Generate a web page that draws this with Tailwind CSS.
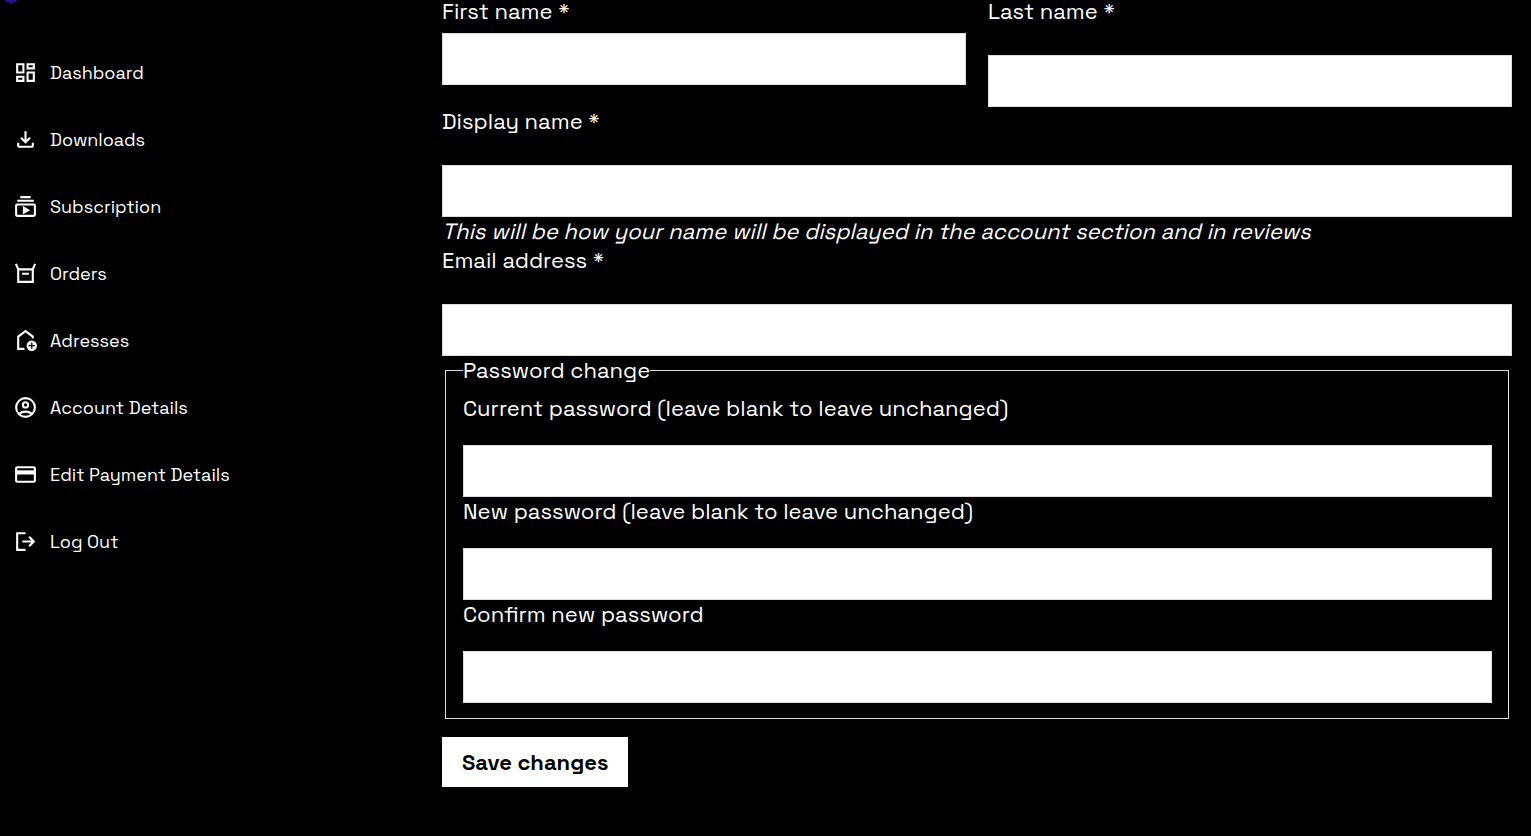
<!DOCTYPE html>
<html lang="en">
  <head>
    <meta charset="UTF-8" />
    <meta name="viewport" content="width=device-width, initial-scale=1.0" />
    <title>Account Details</title>
    <!-- Tailwind CSS CDN -->
    <script src="https://cdn.jsdelivr.net/npm/@tailwindcss/browser@4"></script>
  </head>

  <body class="bg-black text-white font-['Space_Grotesk',Inter,sans-serif]">
    <div class="grid grid-cols-[442px_1fr] min-h-screen">
      <!-- Sidebar -->
      <aside>
        <a href="#" aria-label="Home" class="block h-1 pl-[5px]">
          <svg class="w-3 h-1" viewBox="0 0 12 4" fill="#24128c"><path d="M0 0h12v1L6 4 0 1z" /></svg>
        </a>
        <nav class="flex flex-col gap-10 pt-[55px] pl-[13px] text-[18px] leading-[27px]">
          <a href="#" class="flex items-center gap-3">
            <svg class="w-[25px] h-[25px]" viewBox="0 0 24 24" fill="currentColor"><path d="M19 5v2h-4V5h4M9 5v6H5V5h4m10 8v6h-4v-6h4M9 17v2H5v-2h4M21 3h-8v6h8V3zM11 3H3v10h8V3zm10 8h-8v10h8V11zm-10 4H3v6h8v-6z" /></svg>
            Dashboard
          </a>
          <a href="#" class="flex items-center gap-3">
            <svg class="w-[25px] h-[25px]" viewBox="0 0 24 24" fill="currentColor"><path d="M12 16l-5-5 1.4-1.45 2.6 2.6V4h2v8.15l2.6-2.6L17 11l-5 5zm-6 4q-.825 0-1.413-.587T4 18v-3h2v3h12v-3h2v3q0 .825-.587 1.413T18 20H6z" /></svg>
            Downloads
          </a>
          <a href="#" class="flex items-center gap-3">
            <svg class="w-[25px] h-[25px]" viewBox="0 0 24 24" fill="none" stroke="currentColor" stroke-width="2">
              <path d="M7 3h10M4 6.500h16" />
              <rect x="3" y="10" width="18" height="11" rx="1" />
              <path d="M9.500 11.500v8l7-4z" fill="currentColor" stroke="none" />
            </svg>
            Subscription
          </a>
          <a href="#" class="flex items-center gap-3">
            <svg class="w-[25px] h-[25px]" viewBox="0 0 24 24" fill="none" stroke="currentColor" stroke-width="2">
              <path d="M2.800 2.800L5 8v12h14V8l2.200-5.200M5 8h14M8.700 12.300h6.600" />
            </svg>
            Orders
          </a>
          <a href="#" class="flex items-center gap-3">
            <svg class="w-[25px] h-[25px]" viewBox="0 0 24 24" fill="none" stroke="currentColor" stroke-width="2">
              <path d="M19 10V8.200L12 3 5 8.200V20h6" />
              <circle cx="18" cy="17" r="5" fill="currentColor" stroke="none" />
              <path d="M18 14v6M15 17h6" stroke="#000" stroke-width="1.200" />
            </svg>
            Adresses
          </a>
          <a href="#" class="flex items-center gap-3">
            <svg class="w-[25px] h-[25px]" viewBox="0 0 24 24" fill="none" stroke="currentColor" stroke-width="2">
              <circle cx="12" cy="12" r="9" />
              <circle cx="12" cy="9.500" r="2.500" />
              <path d="M5.800 18c3.600-2.700 8.800-2.700 12.400 0" />
            </svg>
            Account Details
          </a>
          <a href="#" class="flex items-center gap-3">
            <svg class="w-[25px] h-[25px]" viewBox="0 0 24 24" fill="none" stroke="currentColor" stroke-width="2">
              <rect x="3" y="5" width="18" height="14" rx="1" />
              <path d="M3 10h18" stroke-width="4" />
            </svg>
            Edit Payment Details
          </a>
          <a href="#" class="flex items-center gap-3">
            <svg class="w-[25px] h-[25px]" viewBox="0 0 24 24" fill="none" stroke="currentColor" stroke-width="2">
              <path d="M12 4H4v16h8M9 12h11M15.500 7.500L20 12l-4.500 4.500" />
            </svg>
            Log Out
          </a>
        </nav>
      </aside>

      <!-- Account form -->
      <main class="-mt-[3px] pr-[19px] text-[22px] leading-[29px]">
        <form>
          <div class="grid grid-cols-2 gap-[22px]">
            <div>
              <label for="first-name" class="block mb-[7px]">First name *</label>
              <input type="text" id="first-name" class="block w-full h-[52px] px-3 bg-white text-black border border-[#ddd]" />
            </div>
            <div>
              <label for="last-name" class="block mb-[29px]">Last name *</label>
              <input type="text" id="last-name" class="block w-full h-[52px] px-3 bg-white text-black border border-[#ddd]" />
            </div>
          </div>

          <label for="display-name" class="block mb-[29px]">Display name *</label>
          <input type="text" id="display-name" class="block w-full h-[52px] px-3 bg-white text-black border border-[#ddd]" />
          <em class="block">This will be how your name will be displayed in the account section and in reviews</em>

          <label for="email" class="block mb-[29px]">Email address *</label>
          <input type="email" id="email" class="block w-full h-[52px] px-3 bg-white text-black border border-[#ddd]" />

          <fieldset class="mx-[3px] pt-[9px] pb-[15px] pl-[17px] pr-4 border border-[#ddd]">
            <legend>Password change</legend>
            <label for="current-password" class="block mb-[22px]">Current password (leave blank to leave unchanged)</label>
            <input type="password" id="current-password" class="block w-full h-[52px] px-3 bg-white text-black border border-[#ddd]" />
            <label for="new-password" class="block mb-[22px]">New password (leave blank to leave unchanged)</label>
            <input type="password" id="new-password" class="block w-full h-[52px] px-3 bg-white text-black border border-[#ddd]" />
            <label for="confirm-password" class="block mb-[22px]">Confirm new password</label>
            <input type="password" id="confirm-password" class="block w-full h-[52px] px-3 bg-white text-black border border-[#ddd]" />
          </fieldset>

          <button type="submit" class="mt-[18px] h-[50px] px-5 bg-white text-black font-bold">Save changes</button>
        </form>
      </main>
    </div>
  </body>
</html>
